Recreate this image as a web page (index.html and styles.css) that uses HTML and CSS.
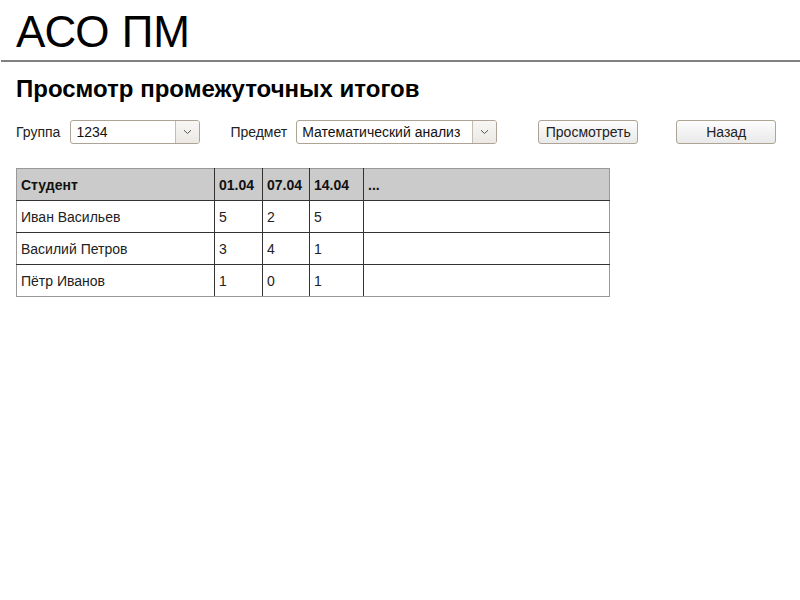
FILE: index.html
```html
<!DOCTYPE html>
<html lang="ru">
<head>
<meta charset="utf-8">
<title>АСО ПМ</title>
<link rel="stylesheet" href="styles.css">
</head>
<body>
<header class="top">
  <h1 class="brand">АСО ПМ</h1>
</header>
<main class="content">
  <h2 class="page-title">Просмотр промежуточных итогов</h2>
  <div class="filters">
    <span class="label">Группа</span>
    <div class="select select-group">
      <span class="select-value">1234</span>
      <span class="select-arrow"><svg width="9" height="6" viewBox="0 0 9 6"><path d="M1 1.2 L4.5 4.5 L8 1.2" fill="none" stroke="#555" stroke-width="1"/></svg></span>
    </div>
    <span class="label label-subject">Предмет</span>
    <div class="select select-subject">
      <span class="select-value">Математический анализ</span>
      <span class="select-arrow"><svg width="9" height="6" viewBox="0 0 9 6"><path d="M1 1.2 L4.5 4.5 L8 1.2" fill="none" stroke="#555" stroke-width="1"/></svg></span>
    </div>
    <button class="btn btn-view">Просмотреть</button>
    <button class="btn btn-back">Назад</button>
  </div>
  <table class="grades">
    <thead>
      <tr><th class="c-name">Студент</th><th class="c-d1">01.04</th><th class="c-d2">07.04</th><th class="c-d3">14.04</th><th class="c-more">...</th></tr>
    </thead>
    <tbody>
      <tr><td>Иван Васильев</td><td>5</td><td>2</td><td>5</td><td></td></tr>
      <tr><td>Василий Петров</td><td>3</td><td>4</td><td>1</td><td></td></tr>
      <tr><td>Пётр Иванов</td><td>1</td><td>0</td><td>1</td><td></td></tr>
    </tbody>
  </table>
</main>
</body>
</html>
```
FILE: styles.css
```css
* { box-sizing: border-box; }
html, body { margin: 0; padding: 0; background: #fff; }
body {
  font-family: "Liberation Sans", Arial, sans-serif;
  color: #000;
  font-size: 14px;
}
.top {
  height: 62px;
  padding: 10px 0 0 16px;
  margin-left: 1px;
  border-bottom: 2px solid #808080;
}
.brand {
  margin: 0;
  font-size: 44px;
  line-height: 44px;
  font-weight: normal;
  margin-left: -1px;
}
.content { padding: 0 16px; }
.page-title {
  margin: 13px 0 0;
  font-size: 24px;
  line-height: 28px;
  font-weight: bold;
}
.filters {
  display: flex;
  align-items: center;
  margin-top: 16px;
  height: 26px;
}
.label { color: #222; margin-right: 10px; }
.label-subject { margin-left: 30px; margin-right: 9px; }
.select {
  display: flex;
  height: 24px;
  border: 1px solid #aea496;
  border-radius: 3px;
  background: #fff;
  overflow: hidden;
}
.select-group { width: 130px; }
.select-subject { width: 201px; }
.select-value {
  flex: 1;
  padding-left: 5px;
  line-height: 22px;
  color: #111;
  white-space: nowrap;
  overflow: hidden;
}
.select-arrow {
  width: 24px;
  border-left: 1px solid #c5bdb2;
  background: linear-gradient(#f8f7f5, #ece9e4);
  display: flex;
  align-items: center;
  justify-content: center;
}
.btn {
  height: 24px;
  width: 100px;
  padding: 0;
  font-family: "Liberation Sans", Arial, sans-serif;
  font-size: 14px;
  color: #222;
  border: 1px solid #aea496;
  border-radius: 3px;
  background: linear-gradient(#fdfdfd, #e9e9e9);
}
.btn-view { margin-left: 41px; }
.btn-back { margin-left: 38px; }
.grades {
  margin-top: 23px;
  border-collapse: collapse;
  width: 594px;
  table-layout: fixed;
}
.grades th, .grades td {
  border: 1px solid #333;
  height: 32px;
  padding: 0 4px;
  text-align: left;
  vertical-align: middle;
  color: #222;
}
.grades th { background: #cbcbcb; font-weight: bold; color: #111; }
.grades tr:first-child th { border-top-color: #999; }
.grades tr > :first-child { border-left-color: #999; }
.grades tr > :last-child { border-right-color: #999; }
.grades tbody tr:last-child td { border-bottom-color: #999; }
.c-name { width: 198px; }
.c-d1 { width: 48px; }
.c-d2 { width: 47px; }
.c-d3 { width: 54px; }
```
